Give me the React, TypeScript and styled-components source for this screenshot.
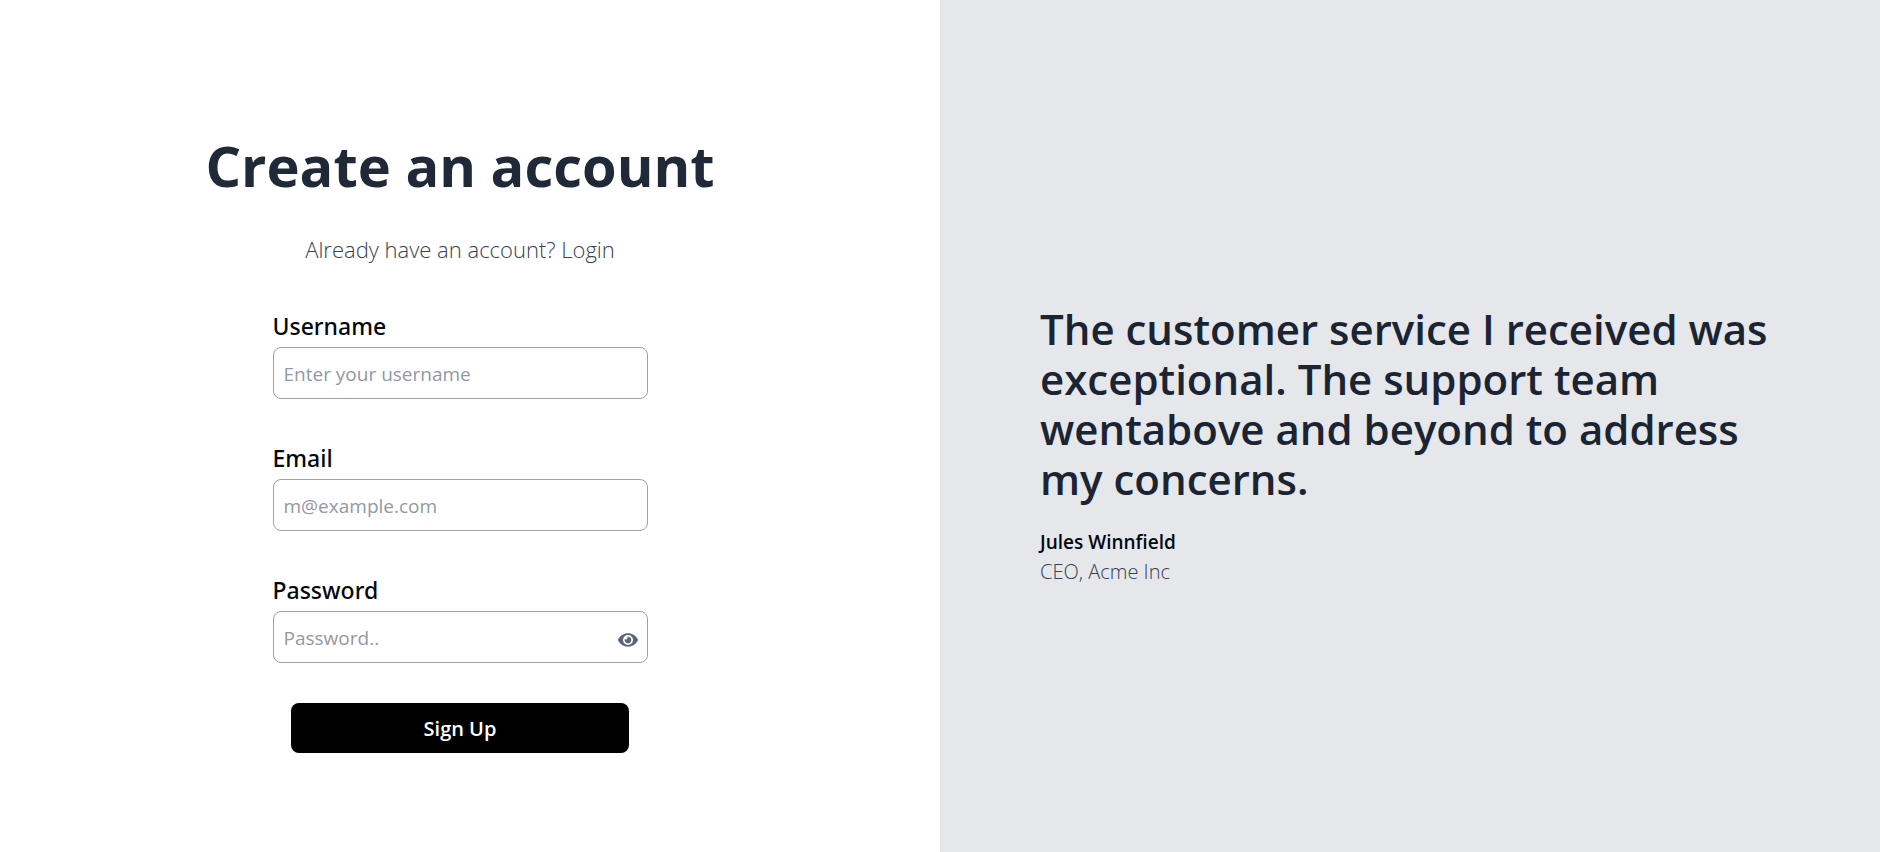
import React, { useState } from "react";
import styled, { createGlobalStyle } from "styled-components";
import { FaEye } from "react-icons/fa";

const GlobalStyle = createGlobalStyle`
  *, *::before, *::after { box-sizing: border-box; }
  body {
    margin: 0;
    background: #ffffff;
    color: #030712;
    font-family: "Segoe UI", "Open Sans", "Noto Sans", sans-serif;
  }
  h1, p, blockquote, figure { margin: 0; }
  button, input { font: inherit; }
`;

const Page = styled.main`
  display: grid;
  grid-template-columns: 1fr 1fr;
  min-height: 100vh;
`;

const FormPanel = styled.section`
  display: flex;
  flex-direction: column;
  align-items: center;
  justify-content: center;
  padding: 30px 20px 0 0;
`;

const Title = styled.h1`
  color: #1f2937;
  font-size: 56px;
  font-weight: 700;
  line-height: 72px;
  text-align: center;
`;

const Subtitle = styled.p`
  margin-top: 32px;
  color: #374151;
  font-size: 22px;
  font-weight: 300;
  line-height: 32px;
`;

const LoginLink = styled.a`
  color: inherit;
  text-decoration: none;
`;

const Form = styled.form`
  display: flex;
  flex-direction: column;
  gap: 43px;
  width: 100%;
  max-width: 375px;
  margin-top: 45px;
`;

const Field = styled.div`
  display: flex;
  flex-direction: column;
  gap: 5px;
`;

const Label = styled.label`
  font-family: "Segoe UI", "Noto Sans", sans-serif;
  font-size: 23px;
  font-weight: 500;
  line-height: 32px;
`;

const InputBox = styled.div`
  display: flex;
  align-items: center;
  height: 52px;
  padding: 2px 9px 0 10px;
  border: 1px solid #9ca3af;
  border-radius: 8px;
  background: #ffffff;
`;

const Input = styled.input`
  flex: 1;
  min-width: 0;
  padding: 0;
  border: 0;
  outline: 0;
  background: transparent;
  font-size: 19px;
  line-height: 32px;
  &::placeholder { color: #9398a5; opacity: 1; }
`;

const ToggleButton = styled.button`
  display: flex;
  padding: 3px 0 0;
  border: 0;
  background: transparent;
  color: #5b6478;
  font-size: 20px;
  cursor: pointer;
`;

const SubmitButton = styled.button`
  align-self: center;
  width: 90%;
  height: 50px;
  margin-top: -3px;
  border: 0;
  border-radius: 8px;
  background: #000000;
  color: #ffffff;
  font-size: 20px;
  font-weight: 600;
  cursor: pointer;
`;

const QuotePanel = styled.section`
  display: flex;
  align-items: center;
  padding: 38px 100px 0;
  background: #e5e7eb;
`;

const Quote = styled.blockquote`
  color: #1a2433;
  font-size: 42px;
  font-weight: 600;
  line-height: 50px;
`;

const Caption = styled.figcaption`
  margin-top: 23px;
  font-size: 19px;
  line-height: 30px;
`;

const Author = styled.p`
  font-weight: 600;
`;

const Role = styled.p`
  color: #374151;
  font-size: 20px;
  font-weight: 300;
`;

type FieldProps = {
  id: string;
  label: string;
  type: string;
  placeholder: string;
  children?: React.ReactNode;
};

function TextField({ id, label, type, placeholder, children }: FieldProps) {
  return (
    <Field>
      <Label htmlFor={id}>{label}</Label>
      <InputBox>
        <Input id={id} name={id} type={type} placeholder={placeholder} />
        {children}
      </InputBox>
    </Field>
  );
}

export default function App() {
  const [visible, setVisible] = useState(false);

  return (
    <>
      <GlobalStyle />
      <Page>
        <FormPanel>
          <Title>Create an account</Title>
          <Subtitle>
            Already have an account? <LoginLink href="#login">Login</LoginLink>
          </Subtitle>
          <Form onSubmit={(event) => event.preventDefault()}>
            <TextField id="username" label="Username" type="text" placeholder="Enter your username" />
            <TextField id="email" label="Email" type="email" placeholder="m@example.com" />
            <TextField
              id="password"
              label="Password"
              type={visible ? "text" : "password"}
              placeholder="Password.."
            >
              <ToggleButton
                type="button"
                aria-label={visible ? "Hide password" : "Show password"}
                onClick={() => setVisible(!visible)}
              >
                <FaEye />
              </ToggleButton>
            </TextField>
            <SubmitButton type="submit">Sign Up</SubmitButton>
          </Form>
        </FormPanel>
        <QuotePanel>
          <figure>
            <Quote>
              The customer service I received was exceptional. The support team wentabove and
              beyond to address my concerns.
            </Quote>
            <Caption>
              <Author>Jules Winnfield</Author>
              <Role>CEO, Acme Inc</Role>
            </Caption>
          </figure>
        </QuotePanel>
      </Page>
    </>
  );
}
